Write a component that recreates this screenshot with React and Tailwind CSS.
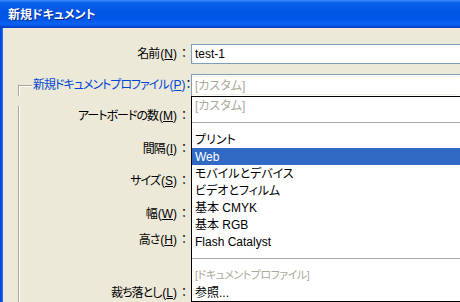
import React from "react";

function Key({ k }) {
  return <span className="underline underline-offset-[1px]">{k}</span>;
}

function Label({ text, k, className = "" }) {
  return (
    <div className={"flex items-center justify-end " + className}>
      <span className="whitespace-nowrap">
        <span className="tracking-[-1px]">{text}</span>
        <span className="ml-px">(<Key k={k} />)</span>
      </span>
      <span className="w-[14px] text-center">：</span>
    </div>
  );
}

function Row({ children, active }) {
  return (
    <div
      className={
        "h-[17px] flex items-center pl-[3px] whitespace-nowrap " +
        (active ? "bg-[#316AC5] text-white" : "")
      }
    >
      {children}
    </div>
  );
}

function Sep() {
  return (
    <div className="h-[17px] flex items-center">
      <div className="h-px w-full bg-[#A7A6A0]" />
    </div>
  );
}

export default function App() {
  return (
    <div className="w-[460px] h-[302px] overflow-hidden relative bg-[#ECE9D8] font-['Liberation_Sans','Noto_Sans_CJK_JP',sans-serif] text-[12px] leading-none text-black [font-feature-settings:'palt']">
      <div className="h-[28px] flex items-center pl-[8px] bg-[linear-gradient(to_bottom,#3C8DF8_0%,#0A61EA_10%,#0055E5_40%,#0057E7_70%,#0B63F3_86%,#0047D2_96%,#003BBE_100%)]">
        <span className="text-white font-bold text-[12px] font-['Noto_Sans_CJK_JP',sans-serif] [text-shadow:1px_1px_0_#0A2B8E]">
          新規ドキュメント
        </span>
      </div>
      <div className="flex h-[274px]">
        <div className="w-[3px] bg-[linear-gradient(to_right,#0040CC,#0658EE_60%,#2A78F4)]" />
        <div className="flex-1 relative">
          <div className="pt-[16px]">
            <div className="flex h-[20px]">
              <Label text="名前" k="N" className="w-[188px]" />
              <div className="flex-1 border-y border-l border-[#7F9DB9] bg-white flex items-center pl-[3px]">
                test-1
              </div>
            </div>
            <div className="flex h-[22px] mt-[10px]">
              <div className="w-[188px] flex items-center">
                <div className="shrink-0 ml-[15px] w-[14px] h-[11px] self-end border-t border-l border-[#A7A6A0] shadow-[inset_1px_1px_0_#fff]" />
                <span className="ml-[1px] text-[#0046D5] whitespace-nowrap">
                  <span className="tracking-[-1px]">新規ドキュメントプロファイル</span>
                  <span className="ml-px">(<Key k="P" />)</span>
                </span>
                <span className="flex-1" />
                <span className="w-[14px] text-center">：</span>
              </div>
              <div className="flex-1 border-t border-l border-[#7F9DB9] bg-white p-px">
                <div className="h-full border-y border-[#F2F0E4] flex items-center pl-[2px] text-[#ACA899]">
                  [カスタム]
                </div>
              </div>
            </div>
            <div className="ml-[15px] w-[173px] h-[210px] border-l border-[#A7A6A0] shadow-[inset_1px_0_0_#fff]">
              <Label text="アートボードの数" k="M" className="h-[20px] mt-[10px]" />
              <Label text="間隔" k="I" className="h-[20px] mt-[13px]" />
              <Label text="サイズ" k="S" className="h-[20px] mt-[12px]" />
              <Label text="幅" k="W" className="h-[20px] mt-[13px]" />
              <Label text="高さ" k="H" className="h-[20px] mt-[6px]" />
              <Label text="裁ち落とし" k="L" className="h-[20px] mt-[33px]" />
            </div>
          </div>
          <div className="absolute left-[188px] top-[68px] w-[300px] h-[206px] border border-black bg-white">
            <Row>
              <span className="text-[#ACA899]">[カスタム]</span>
            </Row>
            <Sep />
            <Row>プリント</Row>
            <Row active>Web</Row>
            <Row>モバイルとデバイス</Row>
            <Row>ビデオとフィルム</Row>
            <Row>基本 CMYK</Row>
            <Row>基本 RGB</Row>
            <Row>Flash Catalyst</Row>
            <Sep />
            <Row>
              <span className="text-[#ACA899] text-[11px] tracking-[-0.5px]">[ドキュメントプロファイル]</span>
            </Row>
            <Row>参照...</Row>
          </div>
        </div>
      </div>
    </div>
  );
}
